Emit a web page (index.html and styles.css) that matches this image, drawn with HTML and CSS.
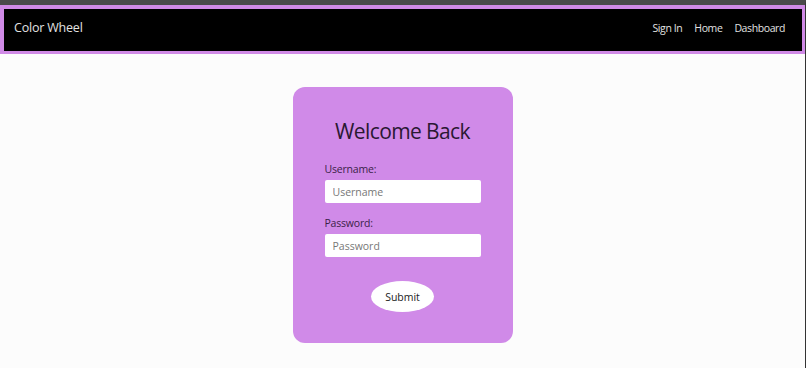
FILE: index.html
```html
<!DOCTYPE html>
<html lang="en">
<head>
<meta charset="utf-8">
<title>Color Wheel</title>
<link rel="stylesheet" href="styles.css">
</head>
<body>
<div class="page">
  <header class="header">
    <nav class="nav">
      <a class="brand" href="#">Color Wheel</a>
      <div class="links">
        <a href="#">Sign In</a>
        <a href="#">Home</a>
        <a href="#">Dashboard</a>
      </div>
    </nav>
  </header>
  <main class="main">
    <form class="card">
      <h1 class="title">Welcome Back</h1>
      <label class="label" for="u">Username:</label>
      <input class="input" id="u" type="text" placeholder="Username">
      <label class="label" for="p">Password:</label>
      <input class="input" id="p" type="password" placeholder="Password">
      <button class="submit" type="button">Submit</button>
    </form>
  </main>
</div>
</body>
</html>
```

FILE: styles.css
```css
* { box-sizing: border-box; }
html, body { margin: 0; padding: 0; }
body {
  background: #fcfcfc;
  font-family: "Open Sans", "Noto Sans", sans-serif;
}
.page {
  min-height: 100vh;
  border-top: 5px solid #4a4a4a;
  border-right: 1px solid #333;
}
.header {
  background: #d08ae6;
  padding: 4px 3px 3px 4px;
}
.nav {
  background: #000;
  height: 42px;
  display: flex;
  align-items: center;
  justify-content: space-between;
  padding: 0 17px 5px 10px;
}
.nav a {
  color: #e2e2e2;
  text-decoration: none;
}
.brand { font-size: 12.5px; letter-spacing: -0.2px; }
.links { display: flex; gap: 12px; font-size: 10.5px; letter-spacing: -0.4px; }
.main {
  display: flex;
  justify-content: center;
  padding-top: 33px;
}
.card {
  width: 220px;
  height: 256px;
  background: #d08ae8;
  border-radius: 12px;
  padding: 30px 32px 0;
  display: flex;
  flex-direction: column;
}
.title {
  margin: 0 0 17px;
  text-align: center;
  font-weight: 400;
  font-size: 21px;
  letter-spacing: -0.6px;
  color: #2a1832;
}
.label {
  font-size: 10.5px;
  letter-spacing: -0.2px;
  color: #3b1f48;
  margin-bottom: 4px;
}
.input {
  height: 23px;
  border: none;
  border-radius: 2px;
  background: #fff;
  padding: 0 8px;
  font-family: inherit;
  font-size: 10.5px;
  margin-bottom: 13px;
}
.input::placeholder { color: #777; }
.submit {
  align-self: center;
  margin-top: 11px;
  width: 63px;
  height: 31px;
  border: none;
  border-radius: 50%;
  background: #fff;
  font-family: inherit;
  font-size: 10.5px;
  font-weight: 500;
  color: #222;
}
```
